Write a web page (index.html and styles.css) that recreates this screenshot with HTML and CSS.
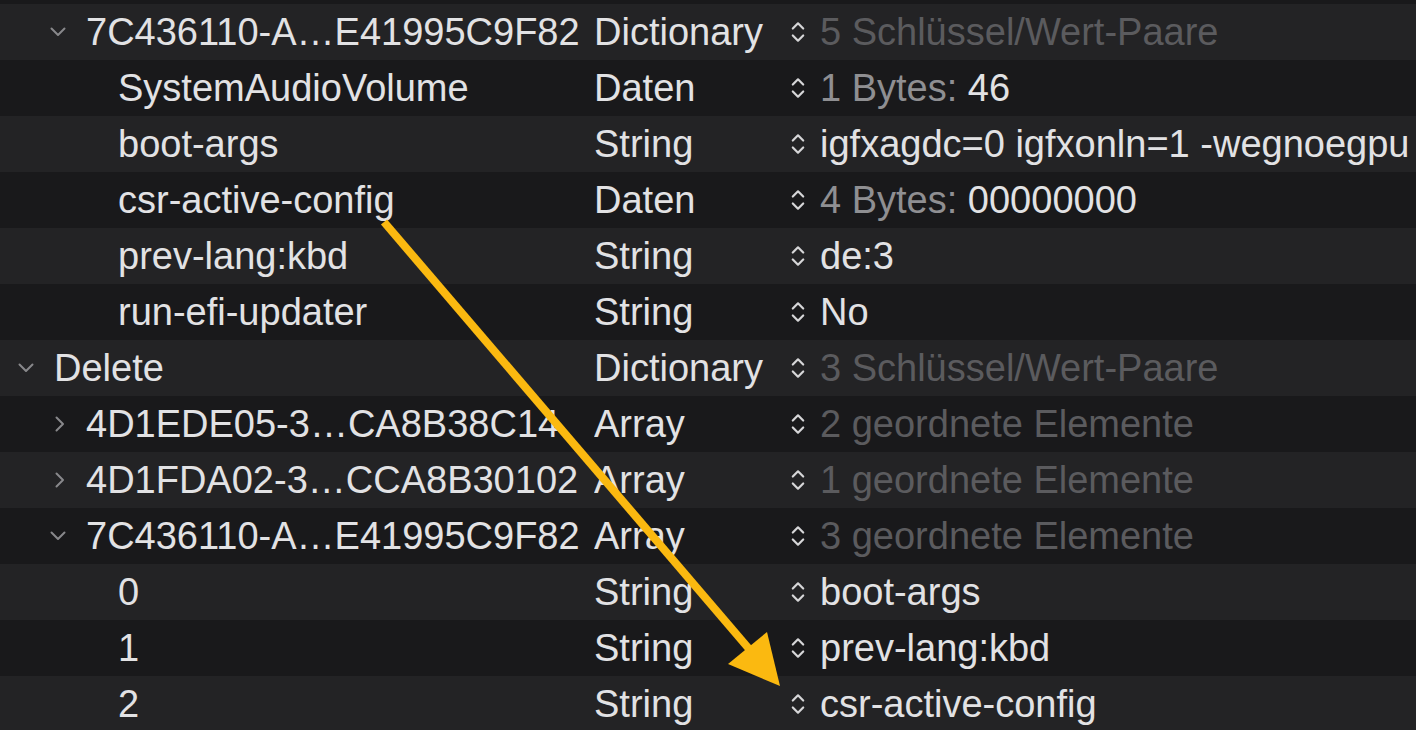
FILE: index.html
```html
<!DOCTYPE html>
<html lang="de">
<head>
<meta charset="utf-8">
<title>Property List</title>
<link rel="stylesheet" href="styles.css">
</head>
<body>
<div class="outline">
  <div class="row">
    <div class="key l1"><span class="twisty"><svg viewBox="0 0 16 16" width="16" height="16"><path d="M1.5 4.5 L8 11 L14.5 4.5" /></svg></span><span class="name">7C436110-A…E41995C9F82</span></div>
    <div class="type">Dictionary</div>
    <div class="value"><span class="stepper"><svg viewBox="0 0 14 22" width="14" height="22"><path d="M1.8 7.5 L7 2.3 L12.2 7.5 M1.8 14.5 L7 19.7 L12.2 14.5" /></svg></span><span class="dim">5 Schlüssel/Wert-Paare</span></div>
  </div>
  <div class="row">
    <div class="key l2"><span class="twisty"></span><span class="name">SystemAudioVolume</span></div>
    <div class="type">Daten</div>
    <div class="value"><span class="stepper"><svg viewBox="0 0 14 22" width="14" height="22"><path d="M1.8 7.5 L7 2.3 L12.2 7.5 M1.8 14.5 L7 19.7 L12.2 14.5" /></svg></span><span class="mid">1 Bytes:</span>&nbsp;46</div>
  </div>
  <div class="row">
    <div class="key l2"><span class="twisty"></span><span class="name">boot-args</span></div>
    <div class="type">String</div>
    <div class="value"><span class="stepper"><svg viewBox="0 0 14 22" width="14" height="22"><path d="M1.8 7.5 L7 2.3 L12.2 7.5 M1.8 14.5 L7 19.7 L12.2 14.5" /></svg></span>igfxagdc=0 igfxonln=1 -wegnoegpu</div>
  </div>
  <div class="row">
    <div class="key l2"><span class="twisty"></span><span class="name">csr-active-config</span></div>
    <div class="type">Daten</div>
    <div class="value"><span class="stepper"><svg viewBox="0 0 14 22" width="14" height="22"><path d="M1.8 7.5 L7 2.3 L12.2 7.5 M1.8 14.5 L7 19.7 L12.2 14.5" /></svg></span><span class="mid">4 Bytes:</span>&nbsp;00000000</div>
  </div>
  <div class="row">
    <div class="key l2"><span class="twisty"></span><span class="name">prev-lang:kbd</span></div>
    <div class="type">String</div>
    <div class="value"><span class="stepper"><svg viewBox="0 0 14 22" width="14" height="22"><path d="M1.8 7.5 L7 2.3 L12.2 7.5 M1.8 14.5 L7 19.7 L12.2 14.5" /></svg></span>de:3</div>
  </div>
  <div class="row">
    <div class="key l2"><span class="twisty"></span><span class="name">run-efi-updater</span></div>
    <div class="type">String</div>
    <div class="value"><span class="stepper"><svg viewBox="0 0 14 22" width="14" height="22"><path d="M1.8 7.5 L7 2.3 L12.2 7.5 M1.8 14.5 L7 19.7 L12.2 14.5" /></svg></span>No</div>
  </div>
  <div class="row">
    <div class="key l0"><span class="twisty"><svg viewBox="0 0 16 16" width="16" height="16"><path d="M1.5 4.5 L8 11 L14.5 4.5" /></svg></span><span class="name">Delete</span></div>
    <div class="type">Dictionary</div>
    <div class="value"><span class="stepper"><svg viewBox="0 0 14 22" width="14" height="22"><path d="M1.8 7.5 L7 2.3 L12.2 7.5 M1.8 14.5 L7 19.7 L12.2 14.5" /></svg></span><span class="dim">3 Schlüssel/Wert-Paare</span></div>
  </div>
  <div class="row">
    <div class="key l1"><span class="twisty"><svg viewBox="0 0 16 16" width="16" height="16"><path d="M6.5 1.5 L13 8 L6.5 14.5" /></svg></span><span class="name">4D1EDE05-3…CA8B38C14</span></div>
    <div class="type">Array</div>
    <div class="value"><span class="stepper"><svg viewBox="0 0 14 22" width="14" height="22"><path d="M1.8 7.5 L7 2.3 L12.2 7.5 M1.8 14.5 L7 19.7 L12.2 14.5" /></svg></span><span class="dim">2 geordnete Elemente</span></div>
  </div>
  <div class="row">
    <div class="key l1"><span class="twisty"><svg viewBox="0 0 16 16" width="16" height="16"><path d="M6.5 1.5 L13 8 L6.5 14.5" /></svg></span><span class="name">4D1FDA02-3…CCA8B30102</span></div>
    <div class="type">Array</div>
    <div class="value"><span class="stepper"><svg viewBox="0 0 14 22" width="14" height="22"><path d="M1.8 7.5 L7 2.3 L12.2 7.5 M1.8 14.5 L7 19.7 L12.2 14.5" /></svg></span><span class="dim">1 geordnete Elemente</span></div>
  </div>
  <div class="row">
    <div class="key l1"><span class="twisty"><svg viewBox="0 0 16 16" width="16" height="16"><path d="M1.5 4.5 L8 11 L14.5 4.5" /></svg></span><span class="name">7C436110-A…E41995C9F82</span></div>
    <div class="type">Array</div>
    <div class="value"><span class="stepper"><svg viewBox="0 0 14 22" width="14" height="22"><path d="M1.8 7.5 L7 2.3 L12.2 7.5 M1.8 14.5 L7 19.7 L12.2 14.5" /></svg></span><span class="dim">3 geordnete Elemente</span></div>
  </div>
  <div class="row">
    <div class="key l2"><span class="twisty"></span><span class="name">0</span></div>
    <div class="type">String</div>
    <div class="value"><span class="stepper"><svg viewBox="0 0 14 22" width="14" height="22"><path d="M1.8 7.5 L7 2.3 L12.2 7.5 M1.8 14.5 L7 19.7 L12.2 14.5" /></svg></span>boot-args</div>
  </div>
  <div class="row">
    <div class="key l2"><span class="twisty"></span><span class="name">1</span></div>
    <div class="type">String</div>
    <div class="value"><span class="stepper"><svg viewBox="0 0 14 22" width="14" height="22"><path d="M1.8 7.5 L7 2.3 L12.2 7.5 M1.8 14.5 L7 19.7 L12.2 14.5" /></svg></span>prev-lang:kbd</div>
  </div>
  <div class="row">
    <div class="key l2"><span class="twisty"></span><span class="name">2</span></div>
    <div class="type">String</div>
    <div class="value"><span class="stepper"><svg viewBox="0 0 14 22" width="14" height="22"><path d="M1.8 7.5 L7 2.3 L12.2 7.5 M1.8 14.5 L7 19.7 L12.2 14.5" /></svg></span>csr-active-config</div>
  </div>
</div>
<svg class="annotation" viewBox="0 0 1416 730" width="1416" height="730">
  <line x1="384" y1="222" x2="750" y2="650" class="shaft" />
  <polygon points="780,686 728,664 767,632" class="head" />
</svg>
</body>
</html>
```
FILE: styles.css
```css
html, body {
  margin: 0;
  padding: 0;
  background: #19191b;
  overflow: hidden;
}

body {
  width: 1416px;
  height: 730px;
  position: relative;
  font-family: "Liberation Sans", Arial, Helvetica, sans-serif;
  font-size: 38px;
  color: #e2e2e4;
}

.outline {
  padding-top: 4px;
  display: flex;
  flex-direction: column;
}

.row {
  display: grid;
  grid-template-columns: 594px 197px 1fr;
  align-items: center;
  height: 56px;
  white-space: nowrap;
}

.row:nth-child(odd) {
  background: #232325;
}

.key {
  display: flex;
  align-items: center;
  overflow: hidden;
}

.l0 { padding-left: 18px; }
.l1 { padding-left: 50px; }
.l2 { padding-left: 82px; }

.twisty {
  display: flex;
  width: 16px;
  height: 16px;
  margin-right: 20px;
  flex: none;
}

.twisty svg path {
  fill: none;
  stroke: #88888b;
  stroke-width: 2;
  stroke-linecap: round;
  stroke-linejoin: round;
}

.type {
  overflow: hidden;
}

.value {
  display: flex;
  align-items: center;
  overflow: hidden;
}

.stepper {
  display: flex;
  width: 14px;
  height: 22px;
  margin-right: 15px;
  flex: none;
}

.stepper svg path {
  fill: none;
  stroke: #d6d6d8;
  stroke-width: 2.2;
  stroke-linecap: round;
  stroke-linejoin: round;
}

.dim {
  color: #5b5b5e;
}

.mid {
  color: #8f8f92;
}

.annotation {
  position: absolute;
  left: 0;
  top: 0;
  pointer-events: none;
}

.shaft {
  stroke: #fbb910;
  stroke-width: 8;
  stroke-linecap: butt;
}

.head {
  fill: #fbb910;
}
```
